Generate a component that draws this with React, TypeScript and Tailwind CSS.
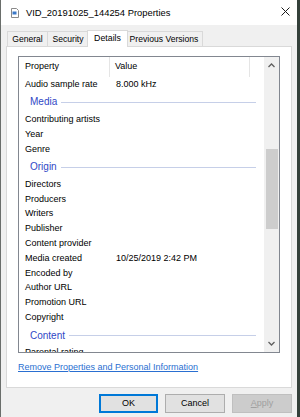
import React from "react";

type Row = { kind: "row"; name: string; value?: string } | { kind: "group"; name: string };

const rows: Row[] = [
  { kind: "row", name: "Audio sample rate", value: "8.000 kHz" },
  { kind: "group", name: "Media" },
  { kind: "row", name: "Contributing artists" },
  { kind: "row", name: "Year" },
  { kind: "row", name: "Genre" },
  { kind: "group", name: "Origin" },
  { kind: "row", name: "Directors" },
  { kind: "row", name: "Producers" },
  { kind: "row", name: "Writers" },
  { kind: "row", name: "Publisher" },
  { kind: "row", name: "Content provider" },
  { kind: "row", name: "Media created", value: "10/25/2019 2:42 PM" },
  { kind: "row", name: "Encoded by" },
  { kind: "row", name: "Author URL" },
  { kind: "row", name: "Promotion URL" },
  { kind: "row", name: "Copyright" },
  { kind: "group", name: "Content" },
  { kind: "row", name: "Parental rating" },
];

const FileIcon = () => (
  <svg width="8" height="10" viewBox="0 0 8 10">
    <path d="M0.5 0.5 H5.5 L7.5 2.5 V9.5 H0.5 Z" fill="#fff" stroke="#8a8a8a" />
    <rect x="1.5" y="3.5" width="4" height="3" fill="#3a78c8" />
  </svg>
);

const CloseIcon = () => (
  <svg width="9" height="9" viewBox="0 0 9 9">
    <path d="M0.5 0.5 L8.5 8.5 M8.5 0.5 L0.5 8.5" stroke="#1a1a1a" strokeWidth="1" />
  </svg>
);

const Tab = ({ label, width, active }: { label: string; width: string; active?: boolean }) =>
  active ? (
    <div
      className={`${width} h-[17px] -mx-[2px] mb-[-1px] z-10 flex items-center justify-center bg-white border border-b-0 border-[#d9d9d9] text-[8.8px] pb-[1px]`}
    >
      {label}
    </div>
  ) : (
    <div
      className={`${width} h-[15px] flex items-center justify-center bg-[#f0f0f0] border border-b-0 border-[#d9d9d9] -ml-[1px] first:ml-0 text-[8.6px]`}
    >
      {label}
    </div>
  );

export default function App() {
  return (
    <div className="w-[300px] h-[417px] flex bg-[#34403a] font-['Liberation_Sans',Arial,sans-serif] text-black overflow-hidden">
      <div className="w-[297px] h-full flex flex-col bg-[#f0f0f0] border-l border-[#6a6e6b]">
        {/* Title bar */}
        <div className="h-[25px] shrink-0 bg-white flex items-center pl-[10px] pr-[7px]">
          <FileIcon />
          <span className="ml-[7px] text-[9.4px] leading-none">VID_20191025_144254 Properties</span>
          <span className="ml-auto mt-[-2px]">
            <CloseIcon />
          </span>
        </div>

        {/* Tabs */}
        <div className="h-[21px] shrink-0 flex items-end pl-[6px]">
          <Tab label="General" width="w-[41px]" />
          <Tab label="Security" width="w-[42px]" />
          <Tab label="Details" width="w-[41px]" active />
          <Tab label="Previous Versions" width="w-[78px]" />
        </div>

        {/* Panel */}
        <div className="ml-[5px] w-[286px] h-[342px] shrink-0 bg-white border border-[#d9d9d9] pt-[9px] pl-[11px]">
          <div className="w-[262px] h-[297px] border border-[#828790] flex overflow-hidden">
            <div className="flex-1 flex flex-col overflow-hidden">
              {/* Header */}
              <div className="h-[20px] shrink-0 flex text-[9px]">
                <div className="w-[91px] pl-[6px] flex items-center border-r border-[#e5e5e5]">Property</div>
                <div className="w-[140px] pl-[5px] flex items-center border-r border-[#e5e5e5]">Value</div>
              </div>
              {rows.map((r, i) =>
                r.kind === "group" ? (
                  <div key={i} className="h-[20.4px] shrink-0 flex items-center pl-[11px] pr-[8px] pt-[1px]">
                    <span className="text-[10px] text-[#3047c6] leading-none">{r.name}</span>
                    <div className="flex-1 h-px bg-[#c6cfe8] ml-[4px]" />
                  </div>
                ) : (
                  <div key={i} className="h-[14.8px] shrink-0 flex items-center text-[9px] leading-none">
                    <div className="w-[91px] pl-[6px] whitespace-nowrap">{r.name}</div>
                    <div className="pl-[6px] whitespace-nowrap">{r.value}</div>
                  </div>
                )
              )}
            </div>
            {/* Scrollbar */}
            <div className="w-[15px] shrink-0 bg-[#f0f0f0] flex flex-col items-center">
              <div className="h-[17px] w-full flex items-center justify-center">
                <svg width="7" height="5" viewBox="0 0 7 5">
                  <path d="M0.5 4 L3.5 1 L6.5 4" fill="none" stroke="#606060" strokeWidth="1.3" />
                </svg>
              </div>
              <div className="mt-[75px] w-[12px] h-[80px] bg-[#cdcdcd]" />
              <div className="flex-1" />
              <div className="h-[17px] w-full flex items-center justify-center">
                <svg width="7" height="5" viewBox="0 0 7 5">
                  <path d="M0.5 1 L3.5 4 L6.5 1" fill="none" stroke="#606060" strokeWidth="1.3" />
                </svg>
              </div>
            </div>
          </div>
          <div className="mt-[10px] text-[9px] leading-none text-[#2a6fd1] underline">
            Remove Properties and Personal Information
          </div>
        </div>

        {/* Buttons */}
        <div className="mt-[6px] flex pl-[98px] gap-[7px]">
          <button className="w-[59px] h-[19px] bg-[#e1e1e1] border-2 border-[#0078d7] text-[9px] leading-none">OK</button>
          <button className="w-[60px] h-[19px] bg-[#e1e1e1] border border-[#adadad] text-[9px] leading-none">Cancel</button>
          <button className="w-[60px] h-[19px] bg-[#cccccc] border border-[#bfbfbf] text-[9px] leading-none text-[#a0a0a0]">
            <span className="underline">A</span>pply
          </button>
        </div>
      </div>
    </div>
  );
}
